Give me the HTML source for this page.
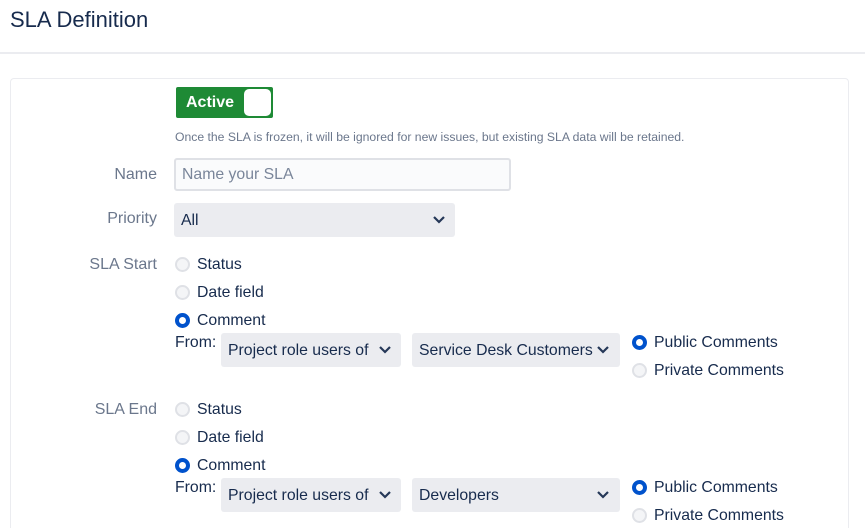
<!DOCTYPE html>
<html><head><style>
*{margin:0;padding:0;box-sizing:border-box}
html,body{width:865px;height:528px;overflow:hidden}
body{background:#fff;font-family:"Liberation Sans",Arial,sans-serif;color:#172b4d;position:relative}
.a{position:absolute;white-space:nowrap}
.lbl{position:absolute;right:708px;font-size:16px;color:#6b778c;line-height:18px}
.t{font-size:15.8px;line-height:18px;color:#172b4d}
.r{position:absolute;width:15px;height:15px;border-radius:50%;background:#f4f5f7;border:2px solid #dfe1e6}
.r.on{background:#fff;border:4.5px solid #0052cc}
.sel{position:absolute;background:#ebecf0;border-radius:3px;font-size:15.8px;color:#172b4d;line-height:35px;padding-left:7px}
.sel svg{position:absolute;top:12px}
</style></head><body>
<div class="a" style="left:10px;top:7px;font-size:22px;color:#172b4d">SLA Definition</div>
<div class="a" style="left:0;top:52px;width:865px;height:2px;background:#ebecf0"></div>
<div class="a" style="left:10px;top:78px;width:839px;height:460px;border:1px solid #ebecf0;border-radius:4px"></div>

<div class="a" style="left:176px;top:87px;width:97px;height:31px;background:#1e8a35;border-radius:2px"></div>
<div class="a" style="left:186px;top:94px;font-size:16px;font-weight:bold;color:#fff">Active</div>
<div class="a" style="left:244px;top:89px;width:27px;height:27px;background:#fff;border-radius:5px"></div>
<div class="a" style="left:175px;top:130px;font-size:12.2px;color:#6b778c">Once the SLA is frozen, it will be ignored for new issues, but existing SLA data will be retained.</div>

<div class="lbl" style="top:166px">Name</div>
<div class="a" style="left:174px;top:158px;width:337px;height:33px;background:#fafbfc;border:2px solid #dfe1e6;border-radius:3px;font-size:15.8px;color:#7a869a;line-height:30px;padding-left:6px">Name your SLA</div>

<div class="lbl" style="top:210px">Priority</div>
<div class="sel" style="left:174px;top:203px;width:281px;height:34px">All<svg style="left:258px" width="14" height="10" viewBox="0 0 14 10"><path d="M2 2l5 5 5-5" fill="none" stroke="#253858" stroke-width="2.2"/></svg></div>

<div class="lbl" style="top:256px">SLA Start</div>
<div class="r" style="left:175px;top:257px"></div><div class="a t" style="left:197px;top:256px">Status</div>
<div class="r" style="left:175px;top:285px"></div><div class="a t" style="left:197px;top:284px">Date field</div>
<div class="r on" style="left:175px;top:313px"></div><div class="a t" style="left:197px;top:312px">Comment</div>
<div class="a t" style="left:175px;top:334px">From:</div>
<div class="sel" style="left:221px;top:333px;width:180px;height:34px">Project role users of<svg style="left:157px" width="14" height="10" viewBox="0 0 14 10"><path d="M2 2l5 5 5-5" fill="none" stroke="#253858" stroke-width="2.2"/></svg></div>
<div class="sel" style="left:412px;top:333px;width:208px;height:34px">Service Desk Customers<svg style="left:184px" width="14" height="10" viewBox="0 0 14 10"><path d="M2 2l5 5 5-5" fill="none" stroke="#253858" stroke-width="2.2"/></svg></div>
<div class="r on" style="left:632px;top:335px"></div><div class="a t" style="left:654px;top:334px">Public Comments</div>
<div class="r" style="left:632px;top:363px"></div><div class="a t" style="left:654px;top:362px">Private Comments</div>

<div class="lbl" style="top:401px">SLA End</div>
<div class="r" style="left:175px;top:402px"></div><div class="a t" style="left:197px;top:401px">Status</div>
<div class="r" style="left:175px;top:430px"></div><div class="a t" style="left:197px;top:429px">Date field</div>
<div class="r on" style="left:175px;top:458px"></div><div class="a t" style="left:197px;top:457px">Comment</div>
<div class="a t" style="left:175px;top:479px">From:</div>
<div class="sel" style="left:221px;top:478px;width:180px;height:34px">Project role users of<svg style="left:157px" width="14" height="10" viewBox="0 0 14 10"><path d="M2 2l5 5 5-5" fill="none" stroke="#253858" stroke-width="2.2"/></svg></div>
<div class="sel" style="left:412px;top:478px;width:208px;height:34px">Developers<svg style="left:184px" width="14" height="10" viewBox="0 0 14 10"><path d="M2 2l5 5 5-5" fill="none" stroke="#253858" stroke-width="2.2"/></svg></div>
<div class="r on" style="left:632px;top:480px"></div><div class="a t" style="left:654px;top:479px">Public Comments</div>
<div class="r" style="left:632px;top:508px"></div><div class="a t" style="left:654px;top:507px">Private Comments</div>
</body></html>
